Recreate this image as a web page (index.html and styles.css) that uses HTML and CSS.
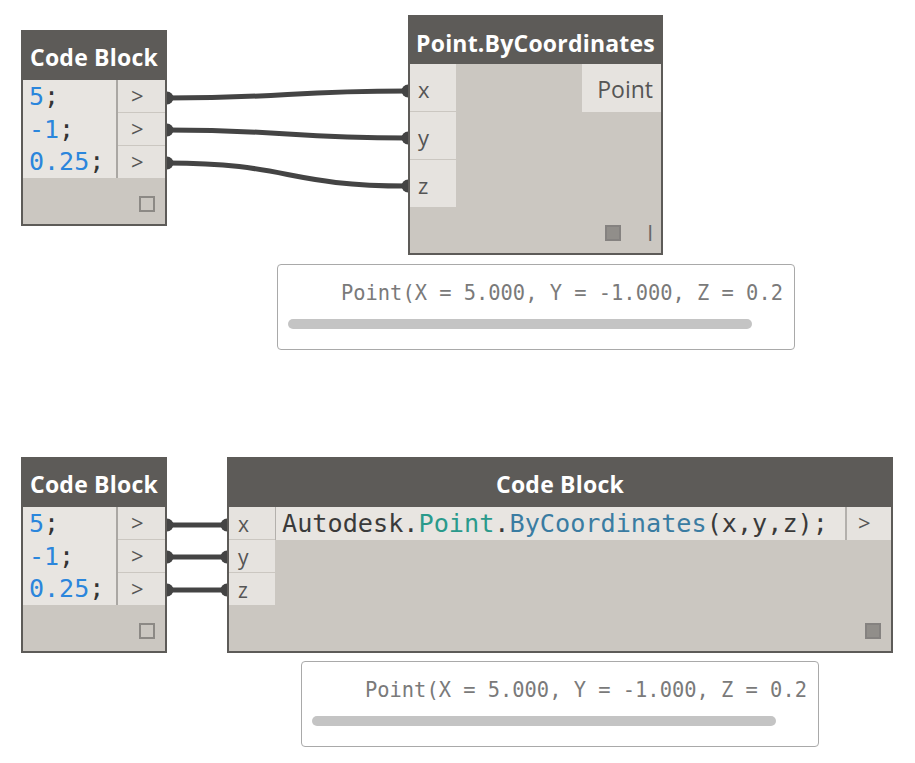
FILE: index.html
```html
<!DOCTYPE html>
<html lang="en">
<head>
    <meta charset="UTF-8">
    <meta name="viewport" content="width=device-width, initial-scale=1.0">
    <title>Code Block - Point.ByCoordinates</title>
    <link rel="stylesheet" href="styles.css">
</head>
<body>
    <div class="canvas">
        <!-- wires sit under the nodes so only the outer half of each end dot shows -->
        <svg class="wires" width="915" height="763" viewBox="0 0 915 763">
            <g fill="none" stroke="#444" stroke-width="5">
                <path d="M167,98 C290,98 285,91 408,91"/>
                <path d="M167,130 C290,130 285,138 408,138"/>
                <path d="M167,163 C290,163 285,186 408,186"/>
                <path d="M167,525 L227,525"/>
                <path d="M167,557 L227,557"/>
                <path d="M167,590 L227,590"/>
            </g>
            <g fill="#444">
                <circle cx="167" cy="98" r="6.5"/>
                <circle cx="167" cy="130" r="6.5"/>
                <circle cx="167" cy="163" r="6.5"/>
                <circle cx="408" cy="91" r="6.5"/>
                <circle cx="408" cy="138" r="6.5"/>
                <circle cx="408" cy="186" r="6.5"/>
                <circle cx="167" cy="525" r="6.5"/>
                <circle cx="167" cy="557" r="6.5"/>
                <circle cx="167" cy="590" r="6.5"/>
                <circle cx="227" cy="525" r="6.5"/>
                <circle cx="227" cy="557" r="6.5"/>
                <circle cx="227" cy="590" r="6.5"/>
            </g>
        </svg>

        <!-- top: code block feeding Point.ByCoordinates -->
        <div class="node cb cb-top">
            <div class="node-head">Code Block</div>
            <div class="cb-body">
                <div class="cb-code">
                    <div class="cb-line"><span class="num">5</span>;</div>
                    <div class="cb-line"><span class="num">-1</span>;</div>
                    <div class="cb-line"><span class="num">0.25</span>;</div>
                </div>
                <div class="ports-out">
                    <div class="port">&gt;</div>
                    <div class="port">&gt;</div>
                    <div class="port">&gt;</div>
                </div>
            </div>
            <div class="node-foot"><span class="chk"></span></div>
        </div>

        <div class="node pbc">
            <div class="node-head">Point.ByCoordinates</div>
            <div class="pbc-body">
                <div class="ports-in">
                    <div class="port">x</div>
                    <div class="port">y</div>
                    <div class="port">z</div>
                </div>
                <div class="port port-out">Point</div>
            </div>
            <div class="node-foot">
                <span class="chk chk-on"></span>
                <span class="lacing">I</span>
            </div>
        </div>

        <div class="preview preview-top">
            <div class="preview-text">Point(X = 5.000, Y = -1.000, Z = 0.2</div>
            <div class="scrollbar"></div>
        </div>

        <!-- bottom: same inputs into a code block calling the constructor -->
        <div class="node cb cb-bottom">
            <div class="node-head">Code Block</div>
            <div class="cb-body">
                <div class="cb-code">
                    <div class="cb-line"><span class="num">5</span>;</div>
                    <div class="cb-line"><span class="num">-1</span>;</div>
                    <div class="cb-line"><span class="num">0.25</span>;</div>
                </div>
                <div class="ports-out">
                    <div class="port">&gt;</div>
                    <div class="port">&gt;</div>
                    <div class="port">&gt;</div>
                </div>
            </div>
            <div class="node-foot"><span class="chk"></span></div>
        </div>

        <div class="node big">
            <div class="node-head">Code Block</div>
            <div class="big-body">
                <div class="ports-in">
                    <div class="port">x</div>
                    <div class="port">y</div>
                    <div class="port">z</div>
                </div>
                <div class="big-main">
                    <div class="big-line">
                        <div class="big-code">Autodesk.<span class="cls">Point</span>.<span class="fn">ByCoordinates</span>(x,y,z);</div>
                        <div class="port">&gt;</div>
                    </div>
                </div>
            </div>
            <div class="node-foot"><span class="chk chk-on"></span></div>
        </div>

        <div class="preview preview-bottom">
            <div class="preview-text">Point(X = 5.000, Y = -1.000, Z = 0.2</div>
            <div class="scrollbar"></div>
        </div>
    </div>
</body>
</html>
```

FILE: styles.css
```css
body {
    margin: 0;
    background: #fff;
    font-family: "Open Sans", "Noto Sans", sans-serif;
}
.canvas {
    position: relative;
    width: 915px;
    height: 763px;
    overflow: hidden;
    background: #fff;
}
.wires {
    position: absolute;
    left: 0;
    top: 0;
}

/* nodes */
.node {
    position: absolute;
    box-sizing: border-box;
    display: flex;
    flex-direction: column;
    border: 2px solid #5d5b58;
    background: #cbc7c1;
}
.node-head {
    flex: none;
    display: flex;
    align-items: center;
    justify-content: center;
    background: #5d5b58;
    color: #fff;
    font-size: 23px;
    font-weight: 700;
    letter-spacing: 0.2px;
}
.node-foot {
    flex: 1;
    display: flex;
    justify-content: flex-end;
    align-items: flex-end;
    gap: 27px;
    padding: 0 10px 12px 0;
}
.chk {
    width: 16px;
    height: 16px;
    box-sizing: border-box;
    border: 2px solid #8c8985;
}
.chk-on {
    background: #918e8a;
    border-color: #858280;
}
.lacing {
    font-size: 21px;
    line-height: 18px;
    color: #666;
    margin-bottom: -1px;
}
.port {
    background: #e6e3df;
    color: #555;
    font-size: 21px;
    box-sizing: border-box;
}

/* small code blocks */
.cb {
    left: 21px;
    width: 146px;
    height: 196px;
}
.cb-top {
    top: 30px;
}
.cb-bottom {
    top: 457px;
}
.cb .node-head {
    height: 48px;
    padding-top: 2px;
    box-sizing: border-box;
}
.cb-body {
    display: flex;
    height: 98px;
}
.cb-code {
    width: 95px;
    padding-left: 6px;
    box-sizing: border-box;
    background: #e8e5e1;
    border-right: 2px solid #aaa7a3;
    font-family: "DejaVu Sans Mono", monospace;
    font-size: 25px;
    color: #333;
}
.cb-line {
    height: 32.7px;
    line-height: 33px;
}
.num {
    color: #2b86dc;
}
.ports-out {
    flex: 1;
    display: flex;
    flex-direction: column;
    gap: 1px;
}
.ports-out .port {
    height: 32px;
    line-height: 31px;
    padding-left: 13px;
    font-size: 22px;
}

/* Point.ByCoordinates */
.pbc {
    left: 408px;
    top: 15px;
    width: 255px;
    height: 240px;
}
.pbc .node-head {
    height: 47px;
    padding-top: 4px;
    box-sizing: border-box;
}
.pbc-body {
    display: flex;
    justify-content: space-between;
    align-items: flex-start;
    height: 144px;
}
.pbc .node-foot {
    gap: 26px;
    padding-right: 8px;
}
.ports-in {
    display: flex;
    flex-direction: column;
    gap: 1px;
}
.pbc .ports-in .port {
    width: 46px;
    height: 47px;
    line-height: 50px;
    padding-left: 8px;
    font-size: 22px;
}
.pbc .port-out {
    width: 79px;
    height: 48px;
    line-height: 50px;
    text-align: right;
    padding-right: 8px;
    font-size: 23px;
}

/* big code block */
.big {
    left: 227px;
    top: 457px;
    width: 666px;
    height: 196px;
}
.big .node-head {
    height: 48px;
    padding-top: 2px;
    box-sizing: border-box;
}
.big-body {
    display: flex;
    height: 99px;
}
.big .ports-in .port {
    width: 46px;
    height: 32px;
    line-height: 34px;
    padding-left: 9px;
    font-size: 21px;
}
.big-main {
    flex: 1;
}
.big-line {
    display: flex;
    height: 33px;
}
.big-code {
    flex: 1;
    border-left: 1px solid #b3b0ac;
    border-right: 2px solid #b3b0ac;
    background: #e8e5e1;
    padding-left: 6px;
    font-family: "DejaVu Sans Mono", monospace;
    font-size: 25.2px;
    line-height: 33px;
    color: #3a3a3a;
    white-space: nowrap;
}
.cls {
    color: #2a9a8b;
}
.fn {
    color: #3a7ca2;
}
.big-line .port {
    width: 44px;
    line-height: 31px;
    padding-left: 11px;
    font-size: 22px;
}

/* preview bubbles */
.preview {
    position: absolute;
    box-sizing: border-box;
    width: 518px;
    height: 86px;
    padding: 16px 10px 0 10px;
    border: 1px solid #a9a9a9;
    border-radius: 4px;
    background: #fff;
}
.preview-top {
    left: 277px;
    top: 264px;
}
.preview-bottom {
    left: 301px;
    top: 661px;
}
.preview-text {
    padding-left: 53px;
    white-space: nowrap;
    font-family: "DejaVu Sans Mono", monospace;
    font-size: 20.4px;
    line-height: 24px;
    color: #7a7a7a;
}
.scrollbar {
    width: 464px;
    height: 10px;
    margin-top: 14px;
    border-radius: 5px;
    background: #c4c4c4;
}
```
